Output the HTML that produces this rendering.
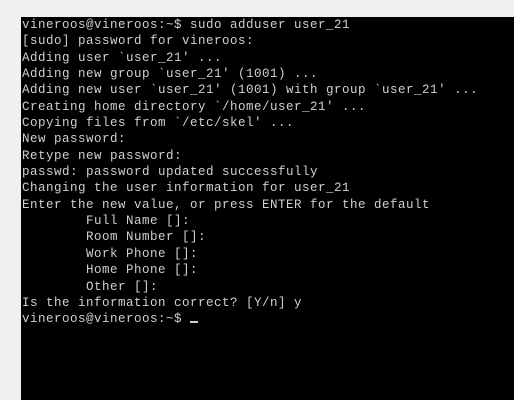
<!DOCTYPE html>
<html><head><style>
html,body{margin:0;padding:0;width:514px;height:400px;overflow:hidden;background:#f0f0f0;}
#t{position:absolute;left:21px;top:17px;right:0;bottom:0;background:#000;}
pre{margin:0;padding:0 0 0 1px;font-family:"Liberation Mono","DejaVu Sans Mono",monospace;font-size:12.5px;letter-spacing:0.5px;line-height:16.35px;color:#d0d0d0;}
.c{display:inline-block;width:8px;height:2px;background:#d0d0d0;vertical-align:-1px;}
</style></head><body><div id="t"><pre>vineroos@vineroos:~$ sudo adduser user_21
[sudo] password for vineroos:
Adding user `user_21' ...
Adding new group `user_21' (1001) ...
Adding new user `user_21' (1001) with group `user_21' ...
Creating home directory `/home/user_21' ...
Copying files from `/etc/skel' ...
New password:
Retype new password:
passwd: password updated successfully
Changing the user information for user_21
Enter the new value, or press ENTER for the default
        Full Name []:
        Room Number []:
        Work Phone []:
        Home Phone []:
        Other []:
Is the information correct? [Y/n] y
vineroos@vineroos:~$ <span class="c"></span></pre></div></body></html>
